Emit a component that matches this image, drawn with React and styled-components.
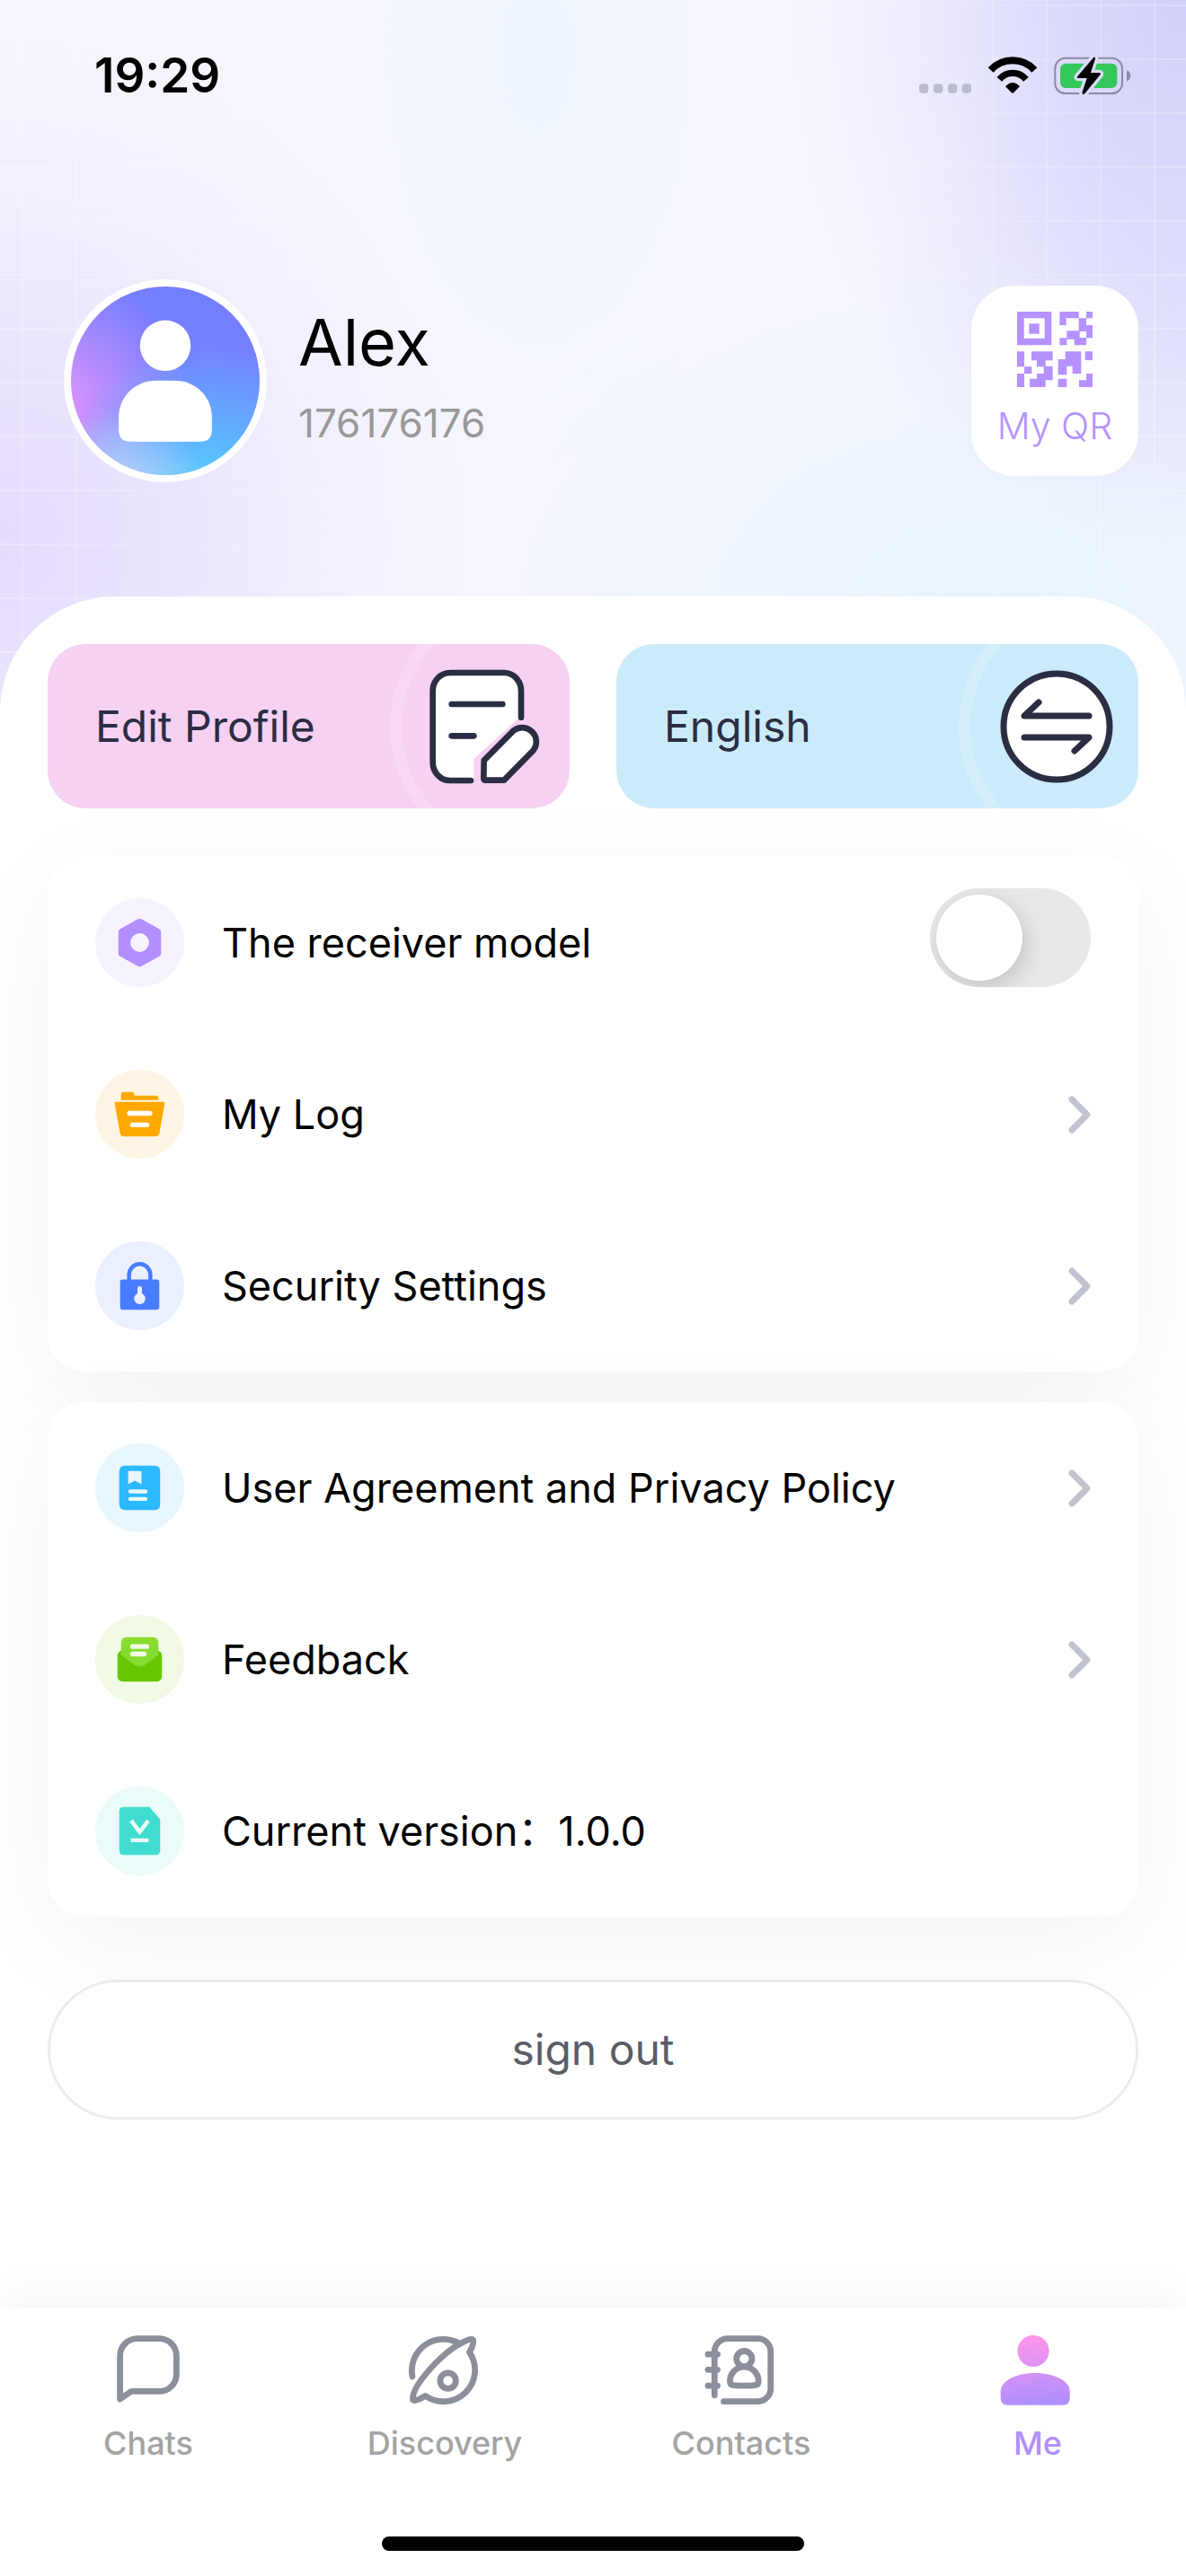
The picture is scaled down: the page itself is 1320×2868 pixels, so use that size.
import React, { useState } from "react";
import styled, { createGlobalStyle } from "styled-components";

const GlobalStyle = createGlobalStyle`
  *, *::before, *::after { box-sizing: border-box; }
  body {
    margin: 0;
    background: #fff;
    color: #000;
    font-family: Inter, "Noto Sans CJK SC", sans-serif;
  }
  button, input { font: inherit; color: inherit; }
  a { color: inherit; text-decoration: none; }
  svg { display: block; flex: none; }
`;

const Page = styled.div`
  position: relative;
  isolation: isolate;
  min-height: 100vh;
  display: flex;
  flex-direction: column;
  background:
    radial-gradient(ellipse 440px 620px at 100% 0, #cfcffb 0%, rgba(208, 207, 251, 0.75) 30%, rgba(208, 207, 251, 0.25) 68%, rgba(208, 207, 251, 0) 100%) no-repeat,
    radial-gradient(ellipse 520px 560px at 0 600px, #e5dcfd 0%, rgba(230, 222, 253, 0.8) 30%, rgba(230, 222, 253, 0.25) 70%, rgba(230, 222, 253, 0) 100%) no-repeat,
    radial-gradient(ellipse 620px 420px at 1100px 680px, #e7f5fe 0%, rgba(233, 245, 254, 0.5) 50%, rgba(233, 245, 254, 0) 100%) no-repeat,
    radial-gradient(ellipse 360px 320px at 100% 400px, rgba(231, 226, 252, 0.8) 0%, rgba(231, 226, 252, 0.3) 55%, rgba(231, 226, 252, 0) 100%) no-repeat,
    radial-gradient(ellipse 240px 460px at 600px 60px, #eff6ff 0%, rgba(241, 247, 255, 0) 100%) no-repeat,
    #f6f5fe;

  /* faint square grid that fades out towards the middle */
  &::before {
    content: "";
    position: absolute;
    inset: 0 0 auto;
    z-index: -1;
    height: 800px;
    background:
      repeating-linear-gradient(to right, transparent 0 24px, rgba(255, 255, 255, 0.24) 24px 26px, transparent 26px 60px),
      repeating-linear-gradient(to bottom, transparent 0 5px, rgba(255, 255, 255, 0.24) 5px 7px, transparent 7px 60px);
    mask-image: linear-gradient(to right, #000 0, transparent 40%, transparent 62%, #000 100%);
  }
`;

const StatusBar = styled.div`
  display: flex;
  align-items: center;
  justify-content: space-between;
  height: 168px;
  padding: 0 58px 0 105px;
`;

const Clock = styled.time`
  font-size: 53px;
  line-height: 60px;
  font-weight: 600;
`;

const Profile = styled.header`
  display: flex;
  align-items: center;
  padding: 143px 53px 127px 71px;
`;

const Avatar = styled.div`
  width: 226px;
  height: 226px;
  border: 8px solid #fff;
  border-radius: 50%;
  background:
    radial-gradient(circle at 28% 108%, rgba(196, 222, 246, 1) 0%, rgba(190, 216, 248, 0) 34%),
    radial-gradient(circle at 72% 104%, #56c8ff 8%, rgba(96, 196, 255, 0) 58%),
    radial-gradient(circle at -4% 62%, #d292fd 8%, rgba(204, 147, 255, 0) 54%),
    #757eff;
  background-origin: border-box;
`;

const Identity = styled.div`
  flex: 1;
  display: flex;
  flex-direction: column;
  gap: 2px;
  margin-left: 35px;
`;

const Name = styled.h1`
  margin: 0;
  font-size: 72px;
  line-height: 92px;
  font-weight: 400;
`;

const AccountId = styled.span`
  font-size: 44px;
  line-height: 84px;
  color: #999;
`;

const QrButton = styled.button`
  display: flex;
  flex-direction: column;
  align-items: center;
  gap: 16px;
  width: 186px;
  height: 212px;
  padding: 29px 0 0;
  border: 0;
  border-radius: 48px;
  background: #fff;
  color: #b592ff;
  font-size: 41px;
  line-height: 54px;
  font-weight: 350;
  white-space: nowrap;
`;

const Sheet = styled.main`
  flex: 1;
  padding: 53px 53px 60px;
  border-radius: 128px 128px 0 0;
  background: #fff;
  overflow: hidden;
`;

const Actions = styled.div`
  display: grid;
  grid-template-columns: 1fr 1fr;
  gap: 52px;
  margin-bottom: 54px;
`;

const ActionButton = styled.button`
  position: relative;
  overflow: hidden;
  display: flex;
  align-items: center;
  justify-content: space-between;
  height: 183px;
  padding: 0 28px 0 53px;
  border: 0;
  border-radius: 42px;
  background: ${(p) => p.$tint};
  color: #2b2d42;
  font-size: 48px;
  line-height: 60px;

  &::before {
    content: "";
    position: absolute;
    top: 50%;
    right: -94px;
    width: 294px;
    height: 294px;
    margin-top: -147px;
    border: 13px solid rgba(255, 255, 255, 0.18);
    border-radius: 50%;
  }

  svg { position: relative; }
`;

const Card = styled.section`
  margin-bottom: 34px;
  border-radius: 42px;
  background: #fff;
  box-shadow: 0 30px 120px rgba(0, 0, 0, 0.05);
`;

const Row = styled.div`
  display: flex;
  align-items: center;
  gap: 42px;
  height: 191px;
  padding: 0 53px;
  font-size: 45px;
  line-height: 60px;
`;

const RowLabel = styled.span`
  flex: 1;
`;

const Badge = styled.span`
  width: 99px;
  height: 99px;
  border-radius: 50%;
  background: ${(p) => p.$tint};
`;

const Switch = styled.input`
  appearance: none;
  align-self: flex-start;
  width: 179px;
  height: 110px;
  margin: 35px 0 0;
  padding: 7px;
  border-radius: 55px;
  overflow: hidden;
  background: ${(p) => (p.checked ? "#b28fff" : "#e8e8e8")};

  &::before {
    content: "";
    display: block;
    width: 96px;
    height: 96px;
    margin-left: ${(p) => (p.checked ? "69px" : "0")};
    border-radius: 50%;
    background: #fff;
    box-shadow: 4px 8px 24px rgba(0, 0, 0, 0.16);
  }
`;

const SignOut = styled.button`
  display: block;
  width: 100%;
  height: 156px;
  margin-top: 70px;
  padding: 0;
  border: 3px solid #ececec;
  border-radius: 78px;
  background: #fff;
  color: #5b5d66;
  font-size: 48px;
  line-height: 60px;
`;

const TabBar = styled.footer`
  position: relative;
  background: #fff;
  box-shadow: 0 -6px 60px rgba(0, 0, 0, 0.06);
`;

const Tabs = styled.nav`
  display: grid;
  grid-template-columns: repeat(4, 1fr);
  padding-top: 27px;
`;

const Tab = styled.a`
  display: flex;
  flex-direction: column;
  align-items: center;
  gap: 17px;
  color: ${(p) => (p.$active ? "#b28fff" : "#a3a3a3")};
  font-size: 36px;
  line-height: 44px;
  font-weight: 500;
`;

const HomeIndicator = styled.div`
  width: 470px;
  height: 16px;
  margin: 82px auto 28px;
  border-radius: 8px;
  background: #000;
`;

const StatusIcons = () => (
  <svg width="240" height="44" viewBox="66 64 720 132" aria-hidden="true">
    <g fill="#bcbccf">
      {[69, 117, 165, 212].map((x) => (
        <rect key={x} x={x} y="158" width="31" height="31" rx="11" />
      ))}
    </g>
    <g fill="none" stroke="#000">
      <path d="M308 112A99 99 0 0 1 454 112" strokeWidth="24" />
      <path d="M337 143A58 58 0 0 1 426 143" strokeWidth="22" />
    </g>
    <path d="M357 167Q381 141 405 167L385 187Q381 191 377 187Z" />
    <rect x="523" y="72" width="224" height="118" rx="34" fill="none" stroke="#8a8aa3" strokeWidth="6" />
    <path d="M762 113Q775 118 775 131T762 150Z" fill="#8a8aa3" />
    <rect x="540" y="90" width="190" height="82" rx="18" fill="#34c759" />
    <path d="M652 69L597 134Q595 139 600 139H629L613 188Q615 197 622 191L674 127Q676 121 670 121H642L657 74Q657 67 652 69Z" stroke="#dcdbfd" strokeWidth="20" />
    <path d="M652 69L597 134Q595 139 600 139H629L613 188Q615 197 622 191L674 127Q676 121 670 121H642L657 74Q657 67 652 69Z" />
  </svg>
);

const PersonSilhouette = () => (
  <svg width="210" height="210" viewBox="57 85 630 632" fill="#fff" aria-hidden="true">
    <circle cx="372" cy="283" r="85" />
    <path d="M216 522C216 455 270 400 340 400H404C474 400 528 455 528 522V565Q528 605 488 605H256Q216 605 216 565Z" />
  </svg>
);

const QrIcon = () => (
  <svg width="84" height="84" viewBox="214 143 252 252" fill="#b592ff" aria-hidden="true">
    <path fillRule="evenodd" d="M214 143H329V255H214ZM237 165V232H306V165Z" />
    <path d="M254 183h34v34h-34z" />
    <path d="M356 143H420V165H445V143H466V165H445V188H466V231H445V255H405V235H380V255H356V231H380V207H420V188V165H378V188H356Z" />
    <path fill="#fff" d="M423 209h22v21h-22z" />
    <path d="M214 276H238V327H263V350H238V327H214ZM214 350H238V396H214Z" />
    <path d="M262 276H333V306H309V325H333V372H309V396H256V367H280V350H303V327H280V306H262Z" />
    <path d="M375 276H428V350H399V325H380V354H351V302H375ZM441 276H466V305H441ZM351 367H380V396H351ZM445 350H466V396H421V372H445Z" />
  </svg>
);

const EditIcon = () => (
  <svg width="128" height="128" viewBox="146 105 384 384" fill="none" stroke="#2b2d42" strokeWidth="20" strokeLinecap="round" strokeLinejoin="round" aria-hidden="true">
    <path d="M157 170Q157 117 212 117H398Q452 117 452 175V262L294 405V476H212Q157 476 157 415Z" fill="#fff" stroke="none" />
    <path d="M284 477H215A58 60 0 0 1 157 417V176A58 60 0 0 1 215 117H395A57 60 0 0 1 452 177V266" />
    <path d="M220 222H390M220 328H294" />
    <path d="M328 410L426 311A47 47 0 0 1 493 376L395 476H334Q327 476 327 468Z" fill="#fff" />
  </svg>
);

const SwapIcon = () => (
  <svg width="126" height="126" viewBox="-63 -63 126 126" fill="none" stroke="#2b2d42" strokeWidth="7" strokeLinecap="round" strokeLinejoin="round" aria-hidden="true">
    <circle r="59" fill="#fff" />
    <path d="M36 -12H-36L-20 -27M-36 12H36L20 27" />
  </svg>
);

const Chevron = () => (
  <svg width="26" height="44" viewBox="0 0 26 44" fill="none" stroke="#bfc4ce" strokeWidth="7" strokeLinecap="round" strokeLinejoin="round" aria-hidden="true">
    <path d="M5 5L22 22L5 39" />
  </svg>
);

const badgeArt = {
  receiver: (
    <>
      <path d="M0 -23L20 -12V12L0 23L-20 12V-12Z" fill="#b28fff" stroke="#b28fff" strokeWidth="8" strokeLinejoin="round" />
      <circle r="10.5" fill="#f6f3ff" />
    </>
  ),
  log: (
    <>
      <path d="M-21 -16V-22Q-21 -25 -18 -25H-9Q-6 -25 -6 -21H18Q21 -21 21 -18V-16Z" fill="#ffa900" />
      <path d="M-26 -14H26Q29 -14 28 -11L22 22Q21 25 18 25H-18Q-21 25 -22 22L-28 -11Q-29 -14 -26 -14Z" fill="#ffa900" />
      <path d="M-11.5 -1H11.5M-8 12H8" stroke="#fff" strokeWidth="5.5" strokeLinecap="round" />
    </>
  ),
  security: (
    <>
      <path d="M-12 -6V-12A12 12.5 0 0 1 12 -12V-6" fill="none" stroke="#477cff" strokeWidth="4.5" />
      <rect x="-22" y="-7" width="44" height="34" rx="2.5" fill="#477cff" />
      <circle cy="14.5" r="6.3" fill="#eaf0ff" />
      <path d="M0 3V12" stroke="#eaf0ff" strokeWidth="5" strokeLinecap="round" />
    </>
  ),
  agreement: (
    <>
      <rect x="-23" y="-25" width="46" height="50" rx="6" fill="#2bb9ff" />
      <path d="M-13 -18Q-13 -19 -12 -19H1Q2 -19 2 -18V-4L-5.5 -8L-13 -4Z" fill="#e8f7ff" />
      <path d="M-10.5 4H6.5M-10.5 12.5H6.5" stroke="#e8f7ff" strokeWidth="4.5" strokeLinecap="round" />
    </>
  ),
  feedback: (
    <>
      <rect x="-25" y="-10" width="50" height="35" rx="6" fill="#66c700" />
      <path d="M-21 -18Q-21 -25 -14 -25H14Q21 -25 21 -18V-5L6 6Q0 10 -6 6L-21 -5Z" fill="#87dc30" />
      <path d="M-8 -14.5H8M-8 -6H5" stroke="#f0fae5" strokeWidth="5.5" strokeLinecap="round" />
    </>
  ),
  version: (
    <>
      <path d="M-18 -27H11L23 -13V22Q23 27 18 27H-18Q-23 27 -23 22V-22Q-23 -27 -18 -27Z" fill="#41dcd0" />
      <path d="M-9.5 -11.5L0 1L9.5 -11.5M-10 10.5H10" fill="none" stroke="#eafbf9" strokeWidth="4.5" />
    </>
  ),
};

const RowBadge = ({ art, tint }) => (
  <Badge $tint={tint}>
    <svg width="99" height="99" viewBox="-50 -50 100 100" aria-hidden="true">{badgeArt[art]}</svg>
  </Badge>
);

const TabIcon = ({ viewBox, children }) => (
  <svg width="84" height="84" viewBox={viewBox} fill="none" stroke="#8b8f9b" strokeWidth="20.5" strokeLinecap="round" strokeLinejoin="round" aria-hidden="true">
    {children}
  </svg>
);

const tabs = [
  {
    label: "Chats",
    icon: (
      <TabIcon viewBox="129 53 254 254">
        <path d="M161 277V131A58 58 0 0 1 219 73H293A58 58 0 0 1 351 131V193A58 58 0 0 1 293 251H202Q198 251 194 254Z" />
      </TabIcon>
    ),
  },
  {
    label: "Discovery",
    icon: (
      <TabIcon viewBox="1124 53 254 254">
        <path d="M1142 201A106 106 0 0 1 1302 91" />
        <path d="M1302 91Q1340 69 1346 77Q1350 92 1334 119A106 106 0 0 1 1186 266Q1152 287 1144 280Q1138 242 1218 158Q1264 111 1302 91Z" />
        <circle cx="1262" cy="215" r="26.5" />
      </TabIcon>
    ),
  },
  {
    label: "Contacts",
    icon: (
      <TabIcon viewBox="190 53 254 254">
        <path d="M227 264V118A45 45 0 0 1 272 73H372A44 44 0 0 1 416 117V241A44 44 0 0 1 372 285H258" />
        <path d="M205 126H237M205 178H237M205 232H237" />
        <circle cx="327" cy="141" r="26" />
        <path d="M327 168C298 168 279 193 279 216Q279 229 291 230Q327 234 363 230Q375 229 375 216C375 193 356 168 327 168Z" />
      </TabIcon>
    ),
  },
  {
    label: "Me",
    active: true,
    icon: (
      <svg width="84" height="84" viewBox="1183 53 254 254" fill="url(#meFill)" aria-hidden="true">
        <defs>
          <linearGradient id="meFill" gradientUnits="userSpaceOnUse" x1="1290" y1="62" x2="1310" y2="297">
            <stop offset="0" stopColor="#ff95e8" />
            <stop offset="1" stopColor="#ae8eff" />
          </linearGradient>
        </defs>
        <circle cx="1295" cy="115" r="53" />
        <path d="M1185 250C1185 217 1235 189 1301 189S1418 217 1418 250V272Q1418 297 1393 297H1210Q1185 297 1185 272Z" />
      </svg>
    ),
  },
];

const LinkRow = ({ art, tint, children }) => (
  <Row as="a" href="#">
    <RowBadge art={art} tint={tint} />
    <RowLabel>{children}</RowLabel>
    <Chevron />
  </Row>
);

export default function App() {
  const [receiver, setReceiver] = useState(false);
  return (
    <Page>
      <GlobalStyle />
      <StatusBar>
        <Clock>19:29</Clock>
        <StatusIcons />
      </StatusBar>
      <Profile>
        <Avatar>
          <PersonSilhouette />
        </Avatar>
        <Identity>
          <Name>Alex</Name>
          <AccountId>176176176</AccountId>
        </Identity>
        <QrButton type="button">
          <QrIcon />
          My QR
        </QrButton>
      </Profile>
      <Sheet>
        <Actions>
          <ActionButton type="button" $tint="#f6d1f2">
            Edit Profile
            <EditIcon />
          </ActionButton>
          <ActionButton type="button" $tint="#cbebfb">
            English
            <SwapIcon />
          </ActionButton>
        </Actions>
        <Card>
          <Row as="label" htmlFor="receiver">
            <RowBadge art="receiver" tint="#f6f3ff" />
            <RowLabel>The receiver model</RowLabel>
            <Switch
              id="receiver"
              type="checkbox"
              role="switch"
              checked={receiver}
              onChange={(e) => setReceiver(e.target.checked)}
            />
          </Row>
          <LinkRow art="log" tint="#fff5e5">My Log</LinkRow>
          <LinkRow art="security" tint="#eaf0ff">Security Settings</LinkRow>
        </Card>
        <Card>
          <LinkRow art="agreement" tint="#e8f7ff">User Agreement and Privacy Policy</LinkRow>
          <LinkRow art="feedback" tint="#f0fae5">Feedback</LinkRow>
          <Row>
            <RowBadge art="version" tint="#eafbf9" />
            <RowLabel>Current version：1.0.0</RowLabel>
          </Row>
        </Card>
        <SignOut type="button">sign out</SignOut>
      </Sheet>
      <TabBar>
        <Tabs>
          {tabs.map((t) => (
            <Tab key={t.label} href="#" $active={t.active} aria-current={t.active ? "page" : undefined}>
              {t.icon}
              {t.label}
            </Tab>
          ))}
        </Tabs>
        <HomeIndicator />
      </TabBar>
    </Page>
  );
}
